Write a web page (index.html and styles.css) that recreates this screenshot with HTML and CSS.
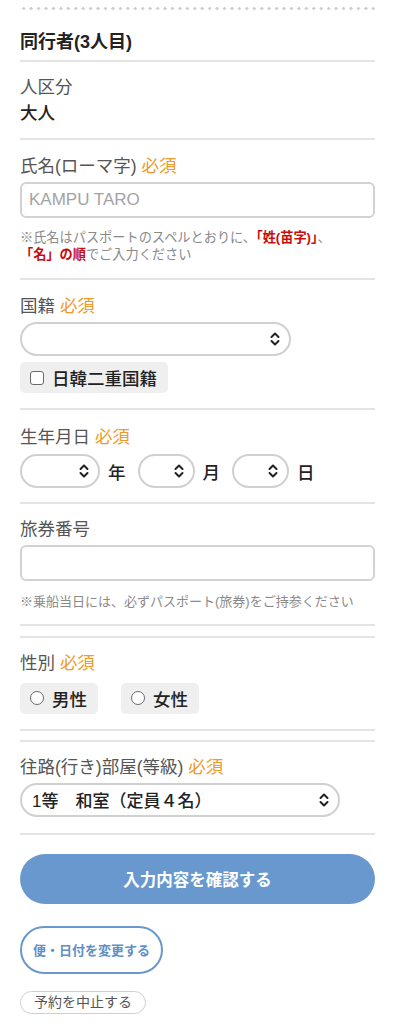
FILE: index.html
```html
<!DOCTYPE html>
<html lang="ja">
<head>
<meta charset="utf-8">
<link rel="stylesheet" href="styles.css">
</head>
<body>
<div class="page">
  <div class="dots"></div>
  <h2 class="title">同行者(3人目)</h2>

  <section class="field f-kubun">
    <div class="label">人区分</div>
    <div class="value">大人</div>
  </section>

  <section class="field f-name">
    <div class="label">氏名(ローマ字) <span class="req">必須</span></div>
    <div class="input"><span class="ph">KAMPU TARO</span></div>
    <p class="note note-name">※氏名はパスポートのスペルとおりに、<b class="red">「姓(苗字)」</b>、<br><b class="red">「名」の順</b>でご入力ください</p>
  </section>

  <section class="field f-nat">
    <div class="label">国籍 <span class="req">必須</span></div>
    <div class="select w-nat"><span></span><svg class="chev" viewBox="0 0 10 14" width="10" height="14"><path d="M1.5 5 L5 1.5 L8.5 5 M1.5 9 L5 12.5 L8.5 9" fill="none" stroke="#222" stroke-width="2" stroke-linecap="round" stroke-linejoin="round"/></svg></div>
    <div class="chip check-chip"><span class="box"></span>日韓二重国籍</div>
  </section>

  <section class="field f-birth">
    <div class="label">生年月日 <span class="req">必須</span></div>
    <div class="date-row">
      <div class="select w-year"><span></span><svg class="chev" viewBox="0 0 10 14" width="10" height="14"><path d="M1.5 5 L5 1.5 L8.5 5 M1.5 9 L5 12.5 L8.5 9" fill="none" stroke="#222" stroke-width="2" stroke-linecap="round" stroke-linejoin="round"/></svg></div>
      <span class="unit">年</span>
      <div class="select w-md"><span></span><svg class="chev" viewBox="0 0 10 14" width="10" height="14"><path d="M1.5 5 L5 1.5 L8.5 5 M1.5 9 L5 12.5 L8.5 9" fill="none" stroke="#222" stroke-width="2" stroke-linecap="round" stroke-linejoin="round"/></svg></div>
      <span class="unit">月</span>
      <div class="select w-md"><span></span><svg class="chev" viewBox="0 0 10 14" width="10" height="14"><path d="M1.5 5 L5 1.5 L8.5 5 M1.5 9 L5 12.5 L8.5 9" fill="none" stroke="#222" stroke-width="2" stroke-linecap="round" stroke-linejoin="round"/></svg></div>
      <span class="unit">日</span>
    </div>
  </section>

  <section class="field f-pass">
    <div class="label">旅券番号</div>
    <div class="input"></div>
    <p class="note note-pass">※乗船当日には、必ずパスポート(旅券)をご持参ください</p>
  </section>

  <div class="spacer sp1"></div>

  <section class="field f-sex">
    <div class="label">性別 <span class="req">必須</span></div>
    <div class="radio-row">
      <div class="chip radio-chip"><span class="circle"></span>男性</div>
      <div class="chip radio-chip"><span class="circle"></span>女性</div>
    </div>
  </section>

  <div class="spacer sp2"></div>

  <section class="field f-room">
    <div class="label">往路(行き)部屋(等級) <span class="req">必須</span></div>
    <div class="select w-room"><span class="opt">1等　和室（定員４名）</span><svg class="chev" viewBox="0 0 10 14" width="10" height="14"><path d="M1.5 5 L5 1.5 L8.5 5 M1.5 9 L5 12.5 L8.5 9" fill="none" stroke="#222" stroke-width="2" stroke-linecap="round" stroke-linejoin="round"/></svg></div>
  </section>

  <div class="actions">
    <button class="btn-primary">入力内容を確認する</button>
    <button class="btn-outline">便・日付を変更する</button>
    <button class="btn-cancel">予約を中止する</button>
  </div>
</div>
</body>
</html>
```

FILE: styles.css
```css
* { box-sizing: border-box; }
html, body { margin: 0; padding: 0; background: #fff; }
body {
  font-family: "Liberation Sans", "Noto Sans CJK JP", sans-serif;
  color: #222;
}
.page { padding: 0 20px; width: 395px; }

.dots {
  height: 3px;
  margin-top: 6.5px;
  background-image: radial-gradient(circle, #cfcfcf 1.4px, transparent 1.6px);
  background-size: 7.45px 3px;
  background-repeat: repeat-x;
  background-position: 0 0;
}

.title {
  margin: 0;
  padding: 20.5px 0 6px;
  font-size: 18px;
  line-height: 24px;
  font-weight: bold;
  color: #222;
  border-bottom: 2px solid #e4e4e4;
}

.field {
  padding: 13px 0 14px;
  border-bottom: 2px solid #e4e4e4;
}
.f-kubun { padding: 12.5px 0 13.5px; }
.f-name { padding: 14px 0 15px; }
.f-nat { padding: 14px 0 15px; }
.f-birth { padding: 15px 0 14px; }
.f-pass { padding: 13px 0 14px; }
.f-sex { padding: 13px 0 15px; }
.f-room { padding: 13px 0 16px; }

.label {
  font-size: 17.5px;
  line-height: 24px;
  color: #555;
}
.req { color: #ef9a2a; }
.value {
  margin-top: 2px;
  font-size: 17.5px;
  line-height: 24px;
  color: #222;
  font-weight: 500;
}

.input {
  margin-top: 4px;
  height: 36px;
  border: 2px solid #d2d2d2;
  border-radius: 6px;
  padding: 0 7px;
  display: flex;
  align-items: center;
}
.ph { color: #a3a3a3; font-size: 17px; }

.note {
  margin: 11px 0 0;
  font-size: 13.2px;
  line-height: 17px;
  color: #8a8a8a;
}
.note-pass { margin-top: 11.5px; font-size: 13px; }
.red { color: #c80d0d; font-weight: bold; }

.select {
  margin-top: 4px;
  height: 34px;
  border: 2px solid #d0d0d0;
  border-radius: 17px;
  display: flex;
  align-items: center;
  justify-content: space-between;
  padding: 0 9px 0 10px;
}
.chev { display: block; }
.w-nat { width: 271px; }
.w-room { width: 320px; }
.opt { font-size: 17px; color: #222; font-weight: 500; }

.chip {
  display: inline-flex;
  align-items: center;
  background: #efefef;
  border-radius: 5px;
  height: 31px;
  padding: 0 11px 0 10px;
  font-size: 17.5px;
  color: #222;
  font-weight: 500;
}
.check-chip { margin-top: 6px; }
.box {
  width: 14px; height: 14px;
  border: 1.5px solid #6a6a6a;
  border-radius: 3px;
  background: #fff;
  margin-right: 8px;
}
.circle {
  width: 14px; height: 14px;
  border: 1.5px solid #6a6a6a;
  border-radius: 50%;
  background: #fff;
  margin-right: 8px;
}

.date-row {
  display: flex;
  align-items: center;
  margin-top: 5px;
}
.date-row .select { margin-top: 0; }
.w-year { width: 80px; }
.w-md { width: 57px; }
.unit {
  font-size: 17.5px;
  color: #222;
  font-weight: 500;
  margin: 0 12px 0 8px;
}

.spacer { border-bottom: 2px solid #e4e4e4; }
.sp1 { height: 12px; }
.sp2 { height: 11px; }

.radio-row {
  display: flex;
  gap: 23px;
  margin-top: 8px;
}

.actions {
  display: flex;
  flex-direction: column;
  align-items: flex-start;
  padding-top: 19px;
}
button { font-family: inherit; cursor: pointer; }
.btn-primary {
  width: 100%;
  height: 50px;
  border: none;
  border-radius: 25px;
  background: #6898cd;
  color: #fff;
  font-size: 16.5px;
  font-weight: bold;
}
.btn-outline {
  margin-top: 22px;
  height: 48px;
  padding: 0 11px;
  border: 2px solid #6898cd;
  border-radius: 24px;
  background: #fff;
  color: #5f8fc6;
  font-size: 13px;
  font-weight: bold;
}
.btn-cancel {
  margin-top: 17px;
  height: 23px;
  padding: 0 13px;
  border: 1.5px solid #cfcfcf;
  border-radius: 12px;
  background: #fff;
  color: #555;
  font-size: 14px;
  line-height: 18px;
}
```
